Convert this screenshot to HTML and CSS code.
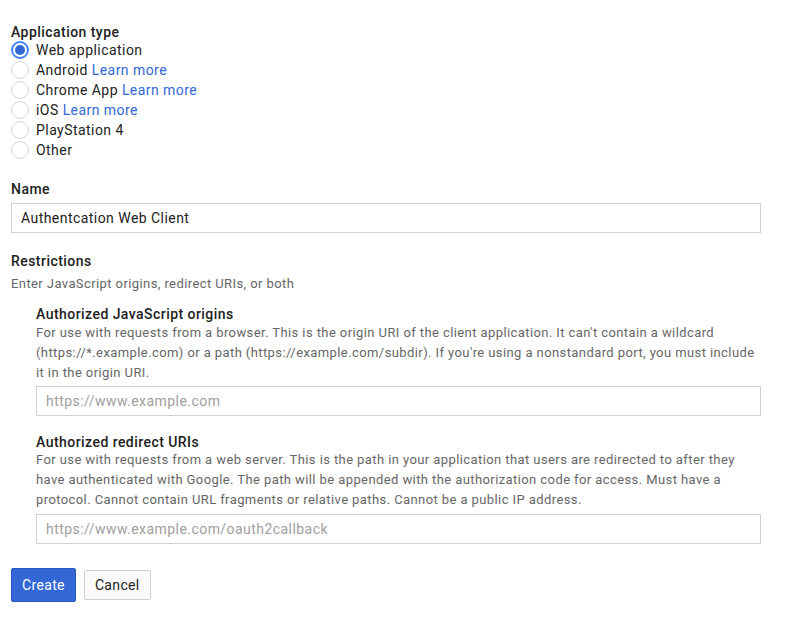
FILE: index.html
```html
<!DOCTYPE html>
<html>
<head>
<meta charset="utf-8">
<link rel="stylesheet" href="styles.css">
</head>
<body>
<form class="form">
  <div class="section">
    <div class="label">Application type</div>
    <div class="radios">
      <label class="radio"><span class="dot checked"></span><span class="text">Web application</span></label>
      <label class="radio"><span class="dot"></span><span class="text">Android <a class="link">Learn more</a></span></label>
      <label class="radio"><span class="dot"></span><span class="text">Chrome App <a class="link">Learn more</a></span></label>
      <label class="radio"><span class="dot"></span><span class="text">iOS <a class="link">Learn more</a></span></label>
      <label class="radio"><span class="dot"></span><span class="text">PlayStation 4</span></label>
      <label class="radio"><span class="dot"></span><span class="text">Other</span></label>
    </div>
  </div>

  <div class="section name">
    <div class="label">Name</div>
    <div class="input">Authentcation Web Client</div>
  </div>

  <div class="section restrictions">
    <div class="label">Restrictions</div>
    <div class="desc">Enter JavaScript origins, redirect URIs, or both</div>
    <div class="sub">
      <div class="label">Authorized JavaScript origins</div>
      <div class="desc">For use with requests from a browser. This is the origin URI of the client application. It can't contain a wildcard (https://*.example.com) or a path (https://example.com/subdir). If you're using a nonstandard port, you must include it in the origin URI.</div>
      <div class="input placeholder">https://www.example.com</div>
    </div>
    <div class="sub second">
      <div class="label">Authorized redirect URIs</div>
      <div class="desc">For use with requests from a web server. This is the path in your application that users are redirected to after they have authenticated with Google. The path will be appended with the authorization code for access. Must have a protocol. Cannot contain URL fragments or relative paths. Cannot be a public IP address.</div>
      <div class="input placeholder">https://www.example.com/oauth2callback</div>
    </div>
  </div>

  <div class="buttons">
    <button type="button" class="btn primary">Create</button>
    <button type="button" class="btn">Cancel</button>
  </div>
</form>
</body>
</html>
```

FILE: styles.css
```css
html, body {
  margin: 0;
  padding: 0;
  background: #fff;
}
body {
  font-family: Roboto, "Liberation Sans", Arial, sans-serif;
  font-size: 14px;
  letter-spacing: 0.45px;
  color: #222;
}
.form {
  padding: 24px 34px 0 11px;
}
.label {
  font-weight: 500;
  line-height: 16px;
  color: #212121;
}
.radios {
  display: flex;
  flex-direction: column;
}
.radio {
  display: flex;
  align-items: center;
  gap: 7px;
  height: 20px;
  line-height: 20px;
}
.dot {
  box-sizing: border-box;
  width: 18px;
  height: 18px;
  border-radius: 50%;
  border: 1px solid #d6d6d6;
  background: #fff;
  position: relative;
}
.dot.checked {
  border: 2px solid #4285f4;
}
.dot.checked::after {
  content: "";
  position: absolute;
  left: 2px;
  top: 2px;
  width: 10px;
  height: 10px;
  border-radius: 50%;
  background: #3367d6;
}
.link {
  color: #3367d6;
  cursor: pointer;
}
.name {
  margin-top: 21px;
}
.name .label {
  margin-bottom: 6px;
}
.input {
  box-sizing: border-box;
  height: 30px;
  border: 1px solid #d0d0d0;
  padding: 0 9px;
  line-height: 28px;
  color: #212121;
}
.input.placeholder {
  color: #a0a0a0;
}
.restrictions {
  margin-top: 20px;
}
.desc {
  font-size: 13px;
  letter-spacing: 0.41px;
  line-height: 20px;
  color: #666;
}
.restrictions > .desc {
  margin-top: 5px;
}
.sub {
  margin-left: 25px;
  margin-top: 12px;
}
.sub .label {
  margin-top: 8px;
}
.sub .desc {
  margin-top: 1px;
}
.sub .input {
  margin-top: 3px;
}
.sub.second {
  margin-top: 18px;
}
.sub.second .desc {
  margin-top: 0;
}
.sub.second .input {
  margin-top: 4px;
}
.buttons {
  display: flex;
  align-items: center;
  gap: 8px;
  margin-top: 24px;
}
.btn {
  font-family: Roboto, "Liberation Sans", Arial, sans-serif;
  font-size: 14px;
  letter-spacing: 0.35px;
  height: 30px;
  padding: 0 10px;
  border: 1px solid #d0d0d0;
  border-radius: 2px;
  background: #fafafa;
  color: #222;
}
.btn.primary {
  height: 34px;
  background: #3367d6;
  border-color: #2a56c6;
  color: #fff;
  padding: 0 10px;
}
```
